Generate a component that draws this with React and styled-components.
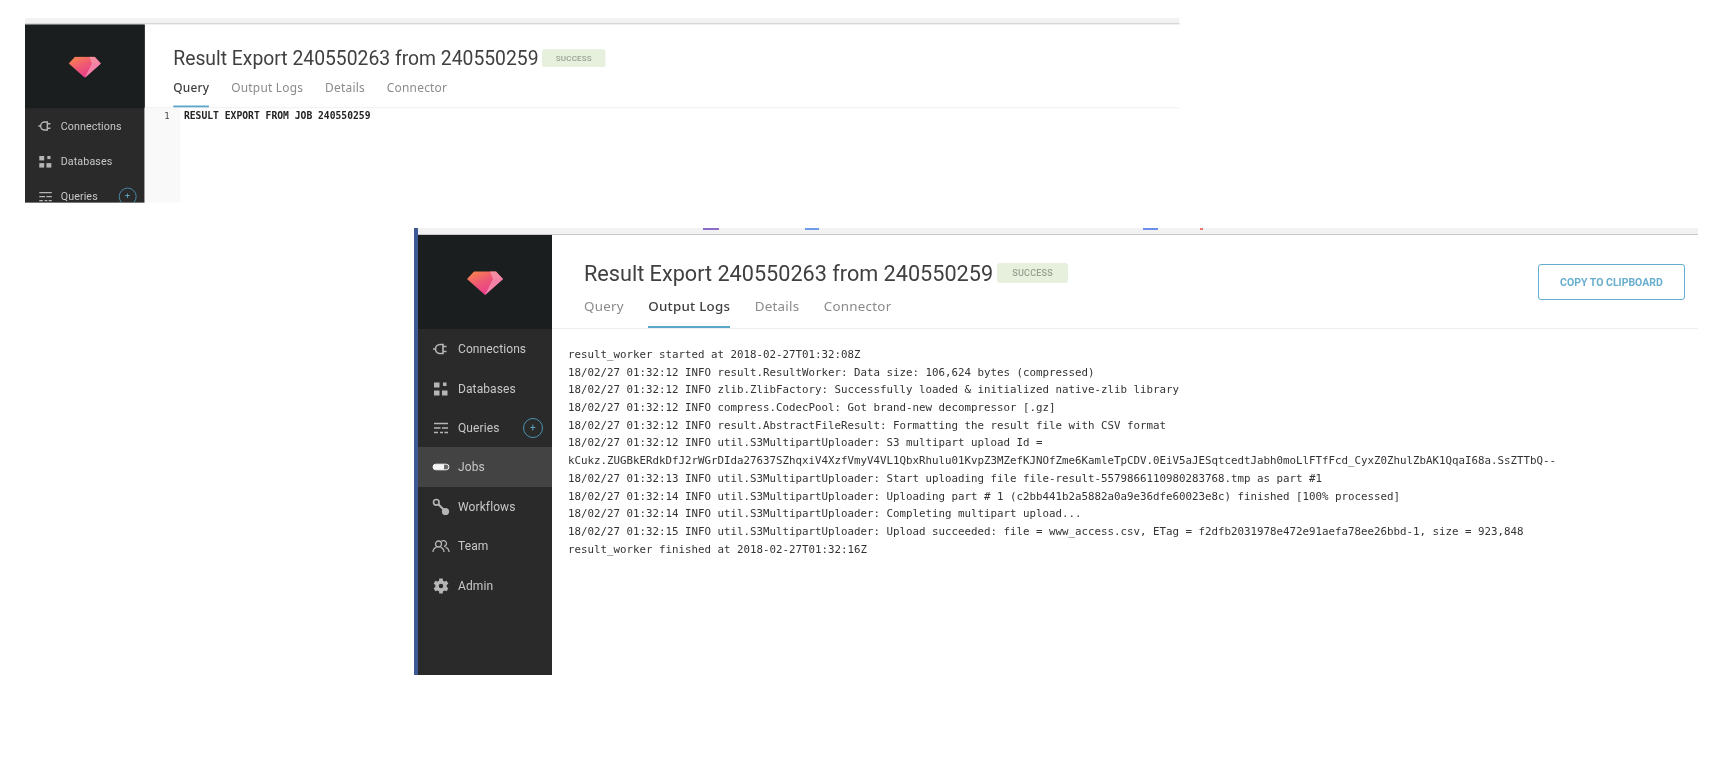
import React from 'react';
import styled, { createGlobalStyle } from 'styled-components';

const GlobalStyle = createGlobalStyle`
	html, body {
		margin: 0;
		padding: 0;
		background: #fff;
		overflow: hidden;
	}
	body {
		font-family: Roboto, "Liberation Sans", sans-serif;
	}
`;

const Page = styled.div`
	width: 1734px;
	height: 762px;
	padding-top: 18px;
	box-sizing: border-box;
	filter: blur(0.6px);
`;

/* the upper shot is the same page pasted in at a smaller size, so it is scaled as a whole */
const ScaledShot = styled.div`
	margin-left: 25px;
	width: 1155px;
	height: 210px;
	> div {
		transform: scale(0.893);
		transform-origin: 0 0;
		width: 1293px;
		height: 207px;
		border-left: none;
	}
`;

const Shot = styled.div`
	position: relative;
	display: flex;
	flex-direction: column;
	overflow: hidden;
	background: #fff;
	box-sizing: border-box;
	border-left: 4px solid #3d5a94;
`;

const LowerShot = styled(Shot)`
	margin: 0 0 0 414px;
	width: 1284px;
	height: 447px;
`;

const BrowserStrip = styled.div`
	position: relative;
	flex: none;
	height: 7px;
	background: #f2f2f2;
	border-bottom: 1px solid #c9c9c9;
	box-sizing: border-box;
`;

const TabMark = styled.span`
	position: absolute;
	top: 0;
	left: ${(props) => props.$left}px;
	width: ${(props) => props.$width}px;
	height: 2px;
	background: ${(props) => props.$color};
`;

const Body = styled.div`
	flex: 1;
	min-height: 0;
	display: flex;
`;

const Sidebar = styled.nav`
	flex: none;
	width: 134px;
	background: #2a2a2a;
	display: flex;
	flex-direction: column;
`;

const LogoArea = styled.div`
	flex: none;
	height: 94px;
	background: #1b1e1f;
	display: flex;
	align-items: center;
	justify-content: center;
	svg {
		display: block;
		margin-top: 2px;
	}
`;

const NavList = styled.div`
	display: flex;
	flex-direction: column;
`;

const NavRow = styled.div`
	position: relative;
	flex: none;
	height: 39.4px;
	display: flex;
	align-items: center;
	gap: 8px;
	padding: 1px 0 0 14px;
	box-sizing: border-box;
	font-size: 12px;
	letter-spacing: 0.1px;
	color: #c8c8c8;
	background: ${(props) => (props.$active ? '#434343' : 'transparent')};
`;

const NavIcon = styled.svg`
	flex: none;
	width: 18px;
	height: 18px;
	color: ${(props) => (props.$active ? '#f2f2f2' : '#b5b5b5')};
`;

const AddButton = styled.span`
	position: absolute;
	right: 9px;
	top: 10px;
	width: 18px;
	height: 18px;
	border: 1.5px solid #4a93b3;
	border-radius: 50%;
	display: flex;
	align-items: center;
	justify-content: center;
	color: #5aa5c6;
	font-size: 10px;
	line-height: 1;
`;

const Main = styled.main`
	flex: 1;
	min-width: 0;
	display: flex;
	flex-direction: column;
`;

const Header = styled.header`
	position: relative;
	flex: none;
	height: 94px;
	box-sizing: border-box;
	padding: 25px 0 0 32px;
	border-bottom: 1px solid #eeeeee;
`;

const TitleRow = styled.div`
	display: flex;
	align-items: center;
	gap: 4px;
	height: 26px;
`;

const Title = styled.h1`
	margin: 0;
	font-size: 21.65px;
	font-weight: 400;
	color: #404040;
	white-space: nowrap;
`;

const StatusBadge = styled.span`
	width: 71px;
	height: 20px;
	border-radius: 3px;
	background: #e6f0dd;
	color: #98a092;
	font-size: 9px;
	font-weight: 500;
	letter-spacing: 0.2px;
	display: flex;
	align-items: center;
	justify-content: center;
`;

const Tabs = styled.div`
	display: flex;
	gap: 24.5px;
	margin-top: 5px;
`;

const Tab = styled.div`
	position: relative;
	height: 35px;
	line-height: 30px;
	font-size: 13.35px;
	letter-spacing: 0.25px;
	font-family: "Noto Sans", Roboto, sans-serif;
	font-weight: ${(props) => (props.$active ? 500 : 400)};
	color: ${(props) => (props.$active ? '#3f3f3f' : '#8b8b8b')};
	border-bottom: 2px solid ${(props) => (props.$active ? '#5aa7c9' : 'transparent')};
	box-sizing: content-box;
`;

const CopyButton = styled.button`
	position: absolute;
	right: 13px;
	top: 29px;
	width: 147px;
	height: 36px;
	padding: 0;
	background: #fff;
	border: 1px solid #62aed0;
	border-radius: 3px;
	color: #68aecd;
	font-family: Roboto, sans-serif;
	font-size: 10.5px;
	font-weight: 700;
`;

const LogOutput = styled.pre`
	margin: 0;
	padding: 17px 0 0 16px;
	font-family: "DejaVu Sans Mono", "Liberation Mono", monospace;
	font-size: 10.8px;
	line-height: 17.69px;
	color: #333;
`;

const CodeArea = styled.div`
	flex: 1;
	display: flex;
	min-height: 0;
`;

const Gutter = styled.div`
	flex: none;
	width: 40px;
	box-sizing: border-box;
	padding: 0 12px 0 0;
	background: #f9f9f9;
	text-align: right;
	font-family: "DejaVu Sans Mono", monospace;
	font-size: 10px;
	line-height: 17px;
	color: #444;
`;

const CodeLine = styled.div`
	padding-left: 4px;
	font-family: "DejaVu Sans Mono", monospace;
	font-size: 10.85px;
	font-weight: 700;
	line-height: 17px;
	color: #222;
	white-space: pre;
`;

const PlugIcon = (props) => (
	<NavIcon viewBox="0 0 18 18" fill="none" stroke="currentColor" strokeWidth="1.6" {...props}>
		<path d="M11 4.500H8a4.500 4.500 0 0 0 0 9h3z" />
		<path d="M1 9h2.500M11 6.500h3.500M11 11.500h3.500" />
	</NavIcon>
);

const GridIcon = (props) => (
	<NavIcon viewBox="0 0 18 18" fill="currentColor" {...props}>
		<rect x="2" y="2.500" width="5.500" height="5" />
		<rect x="11" y="2.500" width="3.500" height="3.500" />
		<rect x="2" y="10.500" width="5.500" height="5" />
		<rect x="10" y="10.500" width="5.500" height="5" />
	</NavIcon>
);

const QueriesIcon = (props) => (
	<NavIcon viewBox="0 0 18 18" fill="none" stroke="currentColor" strokeWidth="1.5" {...props}>
		<path d="M2 4.500h14M2 9h6.500M10 9h6M2 13.500h4M8 13.500h3M12.500 13.500h3.500" />
	</NavIcon>
);

const JobsIcon = (props) => (
	<NavIcon viewBox="0 0 18 18" fill="none" {...props}>
		<rect x="1" y="6.200" width="16" height="5.600" rx="2.800" fill="#6a6a6a" stroke="#f2f2f2" strokeWidth="1" />
		<path d="M3.800 6.200h8.200v5.600H3.800a2.800 2.800 0 0 1 0-5.600z" fill="#f4f4f4" />
	</NavIcon>
);

const WorkflowIcon = (props) => (
	<NavIcon viewBox="0 0 18 18" fill="currentColor" {...props}>
		<circle cx="4.300" cy="4.300" r="2.800" fill="none" stroke="currentColor" strokeWidth="1.6" />
		<path d="M6.300 6.300l6.500 6.500" stroke="currentColor" strokeWidth="2" />
		<circle cx="13.500" cy="13.500" r="3.600" />
	</NavIcon>
);

const TeamIcon = (props) => (
	<NavIcon viewBox="0 0 18 18" fill="none" stroke="currentColor" strokeWidth="1.3" {...props}>
		<circle cx="6.500" cy="7" r="3" />
		<path d="M1 15c0-2.600 1.600-4 3.400-4.600M12 15c0-2.600-1.600-4-3.400-4.600" />
		<path d="M9.500 4.300a3 3 0 1 1 2.500 5.200M17 15c0-2.600-1.600-4-3.400-4.600" />
	</NavIcon>
);

const GearIcon = (props) => (
	<NavIcon viewBox="0 0 24 24" fill="currentColor" {...props}>
		<path
			fillRule="evenodd"
			d="M20.400 13.200a8.500 8.500 0 0 0 0-2.400l2.300-1.800-2.300-4-2.800 1.100a8.300 8.300 0 0 0-2-1.200L15.200 2h-4.600l-.4 2.900a8.300 8.300 0 0 0-2 1.200L5.400 5l-2.300 4 2.300 1.800a8.500 8.500 0 0 0 0 2.400L3.100 15l2.300 4 2.800-1.100a8.300 8.300 0 0 0 2 1.200l.4 2.900h4.600l.4-2.900a8.300 8.300 0 0 0 2-1.200l2.800 1.100 2.300-4zM12.900 15a3 3 0 1 1 0-6 3 3 0 0 1 0 6z"
			transform="translate(-0.900 0)"
		/>
	</NavIcon>
);

const Gem = ({ id }) => (
	<svg width="36" height="24" viewBox="0 0 36 24">
		<defs>
			<linearGradient id={id} x1="0" y1="0" x2="0.75" y2="1">
				<stop offset="0" stopColor="#f98a45" />
				<stop offset="0.5" stopColor="#ee5676" />
				<stop offset="1" stopColor="#e5358f" />
			</linearGradient>
		</defs>
		<path d="M7 0.500h22L36 8 18 24 0 8z" fill={`url(#${id})`} />
		<path d="M23 0.500h6L36 8 18 24 26 8z" fill="#f7a3b6" opacity="0.7" />
		<path d="M18 24 26 8h10z" fill="#f47fa6" opacity="0.7" />
	</svg>
);

const navItems = [
	{ label: 'Connections', icon: PlugIcon },
	{ label: 'Databases', icon: GridIcon },
	{ label: 'Queries', icon: QueriesIcon, canAdd: true },
	{ label: 'Jobs', icon: JobsIcon, active: true },
	{ label: 'Workflows', icon: WorkflowIcon },
	{ label: 'Team', icon: TeamIcon },
	{ label: 'Admin', icon: GearIcon },
];

const tabNames = ['Query', 'Output Logs', 'Details', 'Connector'];

const logLines = [
	'result_worker started at 2018-02-27T01:32:08Z',
	'18/02/27 01:32:12 INFO result.ResultWorker: Data size: 106,624 bytes (compressed)',
	'18/02/27 01:32:12 INFO zlib.ZlibFactory: Successfully loaded & initialized native-zlib library',
	'18/02/27 01:32:12 INFO compress.CodecPool: Got brand-new decompressor [.gz]',
	'18/02/27 01:32:12 INFO result.AbstractFileResult: Formatting the result file with CSV format',
	'18/02/27 01:32:12 INFO util.S3MultipartUploader: S3 multipart upload Id =',
	'kCukz.ZUGBkERdkDfJ2rWGrDIda27637SZhqxiV4XzfVmyV4VL1QbxRhulu01KvpZ3MZefKJNOfZme6KamleTpCDV.0EiV5aJESqtcedtJabh0moLlFTfFcd_CyxZ0ZhulZbAK1QqaI68a.SsZTTbQ--',
	'18/02/27 01:32:13 INFO util.S3MultipartUploader: Start uploading file file-result-5579866110980283768.tmp as part #1',
	'18/02/27 01:32:14 INFO util.S3MultipartUploader: Uploading part # 1 (c2bb441b2a5882a0a9e36dfe60023e8c) finished [100% processed]',
	'18/02/27 01:32:14 INFO util.S3MultipartUploader: Completing multipart upload...',
	'18/02/27 01:32:15 INFO util.S3MultipartUploader: Upload succeeded: file = www_access.csv, ETag = f2dfb2031978e472e91aefa78ee26bbd-1, size = 923,848',
	'result_worker finished at 2018-02-27T01:32:16Z',
];

function SideNav({ gemId, items, highlightJobs }) {
	return (
		<Sidebar>
			<LogoArea>
				<Gem id={gemId} />
			</LogoArea>
			<NavList>
				{items.map(({ label, icon: Icon, canAdd, active }) => (
					<NavRow key={label} $active={active && highlightJobs}>
						<Icon $active={active} />
						{label}
						{canAdd && <AddButton>+</AddButton>}
					</NavRow>
				))}
			</NavList>
		</Sidebar>
	);
}

function ResultHeader({ activeTab, children }) {
	return (
		<Header>
			<TitleRow>
				<Title>Result Export 240550263 from 240550259</Title>
				<StatusBadge>SUCCESS</StatusBadge>
			</TitleRow>
			<Tabs>
				{tabNames.map((name) => (
					<Tab key={name} $active={name === activeTab}>
						{name}
					</Tab>
				))}
			</Tabs>
			{children}
		</Header>
	);
}

export default function App() {
	return (
		<Page>
			<GlobalStyle />
			<ScaledShot>
				<Shot>
					<BrowserStrip />
					<Body>
						{/* this shot is cropped right after the third menu row */}
						<SideNav gemId="gem-top" items={navItems.slice(0, 3)} />
						<Main>
							<ResultHeader activeTab="Query" />
							<CodeArea>
								<Gutter>1</Gutter>
								<CodeLine>RESULT EXPORT FROM JOB 240550259</CodeLine>
							</CodeArea>
						</Main>
					</Body>
				</Shot>
			</ScaledShot>
			<LowerShot>
				<BrowserStrip>
					<TabMark $left={285} $width={16} $color="#8a6cc9" />
					<TabMark $left={387} $width={14} $color="#6d9be8" />
					<TabMark $left={725} $width={15} $color="#6d8fe8" />
					<TabMark $left={782} $width={3} $color="#e8786d" />
				</BrowserStrip>
				<Body>
					<SideNav gemId="gem-bottom" items={navItems} highlightJobs />
					<Main>
						<ResultHeader activeTab="Output Logs">
							<CopyButton>COPY TO CLIPBOARD</CopyButton>
						</ResultHeader>
						<LogOutput>{logLines.join('\n')}</LogOutput>
					</Main>
				</Body>
			</LowerShot>
		</Page>
	);
}
